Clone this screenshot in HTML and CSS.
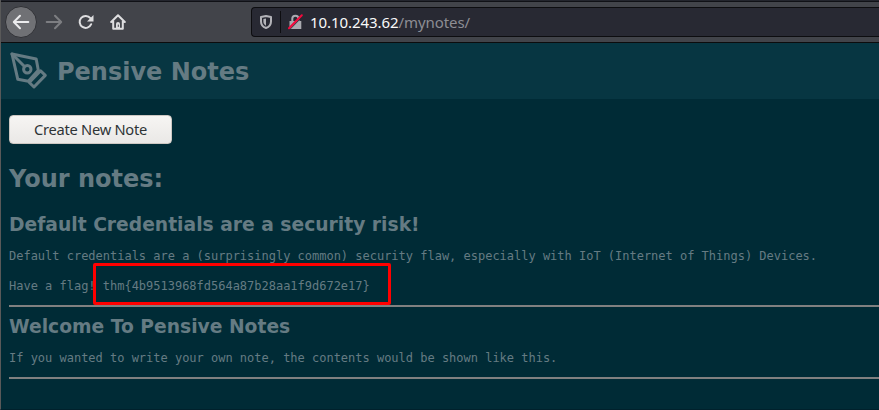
FILE: index.html
```html
<!DOCTYPE html>
<html lang="en">
<head>
<meta charset="utf-8">
<title>Pensive Notes</title>
<link rel="stylesheet" href="styles.css">
</head>
<body>
<div class="window">
  <nav class="toolbar">
    <button class="back" aria-label="Back">
      <svg width="18" height="16" viewBox="0 0 18 16"><path d="M8 1.8L1.8 8L8 14.2M2 8H16.3"/></svg>
    </button>
    <svg class="icon forward" width="18" height="16" viewBox="0 0 18 16"><path d="M10 1.8L16.2 8L10 14.2M16 8H1.7"/></svg>
    <svg class="icon reload" width="16" height="16" viewBox="0 0 16 16"><path d="M13.2 10.2A6 6 0 1 1 12.4 4.2"/><path class="solid" d="M15.5 1V7.5H9Z"/></svg>
    <svg class="icon home" width="16" height="16" viewBox="0 0 16 16"><path d="M1.2 8L8 1.2L14.8 8M3.2 7V14.7H12.8V7"/><path class="solid" d="M6 14V10Q6 8 8 8Q10 8 10 10V14Z"/><path class="knob" d="M8.3 11V12.5"/></svg>
    <div class="address">
      <svg class="shield" width="12" height="14" viewBox="0 0 12 14"><path d="M6 1L11 2.1V6.5C11 10 8.8 12 6 13C3.2 12 1 10 1 6.5V2.1Z"/><path class="solid" d="M6 3.5L3.4 4V6.5C3.4 8.7 4.4 9.9 6 10.7Z"/></svg>
      <span class="divider"></span>
      <svg class="lock" width="15" height="16" viewBox="0 0 15 16"><path class="body" d="M1.5 7H13.3V15H1.5Z"/><path class="shackle" d="M4.3 7V4.5Q4.3 1.7 7.4 1.7Q10.5 1.7 10.5 4.5V7"/><path class="gap" d="M1.7 15.6L14.5 2.6"/><path class="slash" d="M1 14.3L13.8 1.3"/></svg>
      <span class="url">10.10.243.62<span class="path">/mynotes/</span></span>
    </div>
  </nav>
  <header class="header">
    <svg class="pen" width="38" height="38" viewBox="0 0 38 38"><path d="M2 2L26.2 7L28.3 18.3L18.3 29.2L7.8 27.3Z"/><path d="M2 2L14.5 14.5"/><circle cx="17.3" cy="17.3" r="3.7"/><path d="M30.6 18.8L35.3 23.4L24 35L19.3 30.5Z"/></svg>
    <h1>Pensive Notes</h1>
  </header>
  <main class="content">
    <button class="create">Create New Note</button>
    <h2>Your notes:</h2>
    <section class="note">
      <h3>Default Credentials are a security risk!</h3>
      <p>Default credentials are a (surprisingly common) security flaw, especially with IoT (Internet of Things) Devices.</p>
      <p class="flag">Have a flag! thm{4b9513968fd564a87b28aa1f9d672e17}<span class="marker"></span></p>
    </section>
    <section class="note second">
      <h3>Welcome To Pensive Notes</h3>
      <p>If you wanted to write your own note, the contents would be shown like this.</p>
    </section>
  </main>
</div>
</body>
</html>
```
FILE: styles.css
```css
* { box-sizing: border-box; }
body { margin: 0; background: #002b36; color: #657b83; font-family: "DejaVu Sans", sans-serif; }
svg { flex: none; fill: none; stroke: currentColor; stroke-width: 2; stroke-linecap: round; stroke-linejoin: round; }
.solid { fill: currentColor; stroke: none; }
.window { height: 410px; overflow: hidden; border-left: 1px solid #595959; border-bottom: 1px solid #00212c; }
.toolbar { height: 43px; display: flex; align-items: center; padding-left: 4px; background: #42444a; border-top: 1px solid #23252d; border-bottom: 1px solid #0c0c0d; box-shadow: inset 0 1px #101116; color: #dedee0; }
.back { width: 32px; height: 32px; display: flex; align-items: center; justify-content: center; padding: 0; border: 1px solid #303136; border-radius: 50%; background: #707175; color: #ececee; }
.forward { margin-left: 8px; color: #7d7e82; }
.reload { margin-left: 15px; }
.home { margin-left: 16px; }
.knob { stroke: #42444a; stroke-width: 1; }
.address { flex: 1; height: 30px; margin-left: 125px; display: flex; align-items: center; padding-left: 8px; background: #282933; border: 1px solid #0d0d10; border-right: 0; border-radius: 4px 0 0 4px; }
.shield { color: #b3b3b8; }
.divider { width: 1px; height: 22px; margin: 0 7px 0 8px; background: #0d0d10; }
.lock .body { fill: #aaaab0; stroke: none; }
.lock .shackle { stroke: #aaaab0; }
.lock .gap { stroke: #282933; stroke-width: 1; }
.lock .slash { stroke: #f3093c; stroke-width: 2; }
.url { margin-left: 7px; color: #f9f9fa; font: 15px/20px "Noto Sans", sans-serif; letter-spacing: -.07px; white-space: nowrap; }
.path { color: #8d8d93; }
.header { height: 56px; display: flex; align-items: center; padding-left: 9px; background: #073642; }
.header h1 { margin: 2px 0 0 9px; font-size: 24px; line-height: 28px; }
.pen { stroke-width: 3; }
.content { padding: 16px 0 0 8px; }
.create { display: block; width: 163px; height: 29px; padding: 0 0 2px; border: 1px solid #cdc7c2; border-radius: 4px; background: linear-gradient(#f6f5f3, #eae8e6); color: #2e3436; font: 14.67px/20px "Noto Sans", sans-serif; letter-spacing: -.26px; }
h2 { margin: 21px 0 20px; font-size: 24px; line-height: 28px; }
h3 { margin: 0; font-size: 18.72px; line-height: 24px; }
.note { height: 94px; border-bottom: 2px solid #808080; border-bottom-style: inset; }
.note p { margin: 11px 0 0; font: 12px/16px "DejaVu Sans Mono", monospace; letter-spacing: -.01px; white-space: nowrap; }
.note .flag { position: relative; margin-top: 14px; }
.marker { position: absolute; left: 84px; top: -15px; width: 298px; height: 42px; border: 3px solid #f00; border-radius: 2px; }
.note.second { height: 72px; padding-top: 8px; }
```
